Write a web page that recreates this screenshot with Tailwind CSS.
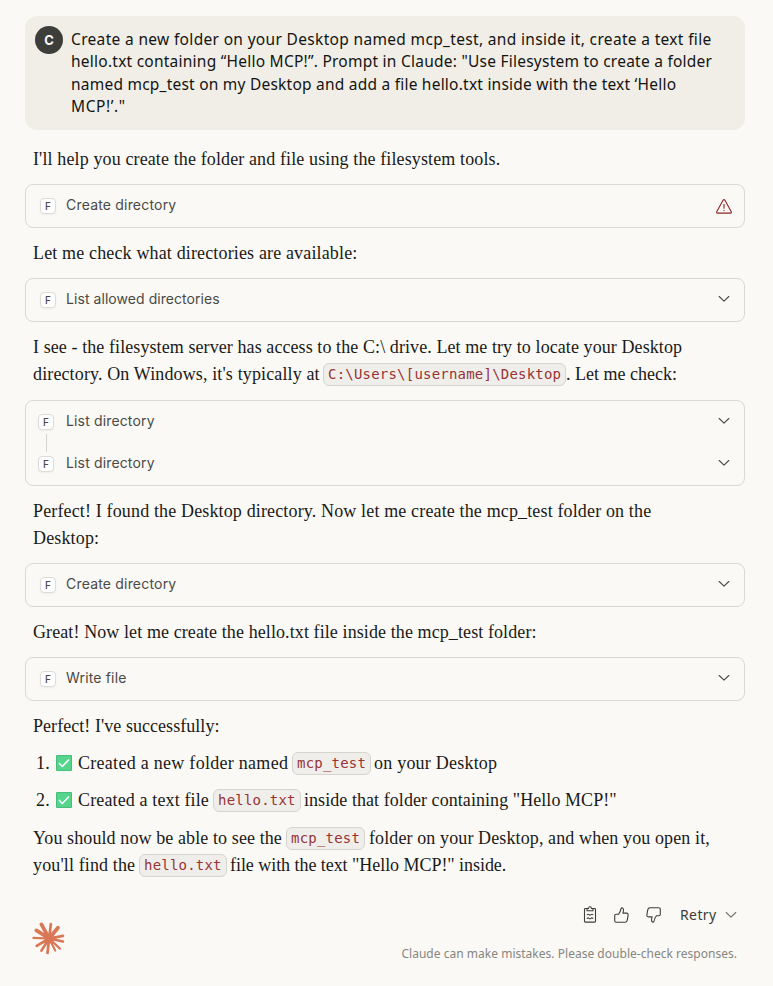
<!DOCTYPE html>
<html lang="en">
<head>
<meta charset="utf-8">
<title>Claude</title>
<script src="https://cdn.jsdelivr.net/npm/@tailwindcss/browser@4"></script>
</head>
<body class="w-[773px] h-[986px] overflow-hidden bg-[#faf9f5] text-[#1a1a18] font-['Liberation_Serif',serif] text-[18px] leading-[27px] whitespace-nowrap">
<svg class="hidden">
  <symbol id="chev" viewBox="0 0 12 8"><path d="M1.200 1.500 6 6.200l4.800-4.700" fill="none" stroke="currentColor" stroke-width="1.1" stroke-linecap="round" stroke-linejoin="round"/></symbol>
  <symbol id="check" viewBox="0 0 16 16"><rect width="16" height="16" rx="1" fill="#46bd7c"/><rect x="1" y="1" width="14" height="14" fill="#55d58c"/><path d="m3 8 3.3 3.4L13 4.5" fill="none" stroke="#fff" stroke-width="1.5"/></symbol>
</svg>
<main class="ml-[25px] w-[720px] pt-4">
  <section class="h-[114px] rounded-xl bg-[#f0eee6] flex pl-[10px] pt-[10px] gap-2 font-['Noto_Sans',sans-serif] text-[15.5px] leading-[22.3px] text-[#141413]">
    <div class="size-7 rounded-full bg-[#3d3d3a] text-[#faf9f5] flex items-center justify-center font-['Inter',sans-serif] font-bold text-[13px]">C</div>
    <div class="pt-[2px]">
      <div class="tracking-[0.33px]">Create a new folder on your Desktop named mcp_test, and inside it, create a text file</div>
      <div class="tracking-[0.24px]">hello.txt containing “Hello MCP!”. Prompt in Claude: "Use Filesystem to create a folder</div>
      <div class="tracking-[0.225px]">named mcp_test on my Desktop and add a file hello.txt inside with the text ‘Hello</div>
      <div class="tracking-[0.6px]">MCP!’."</div>
    </div>
  </section>

  <p class="h-[54px] pt-4 pl-2 tracking-[0.12px]">I'll help you create the folder and file using the filesystem tools.</p>
  <section class="h-[44px] rounded-lg border border-[#d9d8d3] flex items-center pl-[14px] pr-3 font-['Inter',sans-serif] text-[14px] text-[#4a4a46]">
    <span class="size-4 rounded border border-[#dddcd8] bg-white shadow-xs flex items-center justify-center text-[10px] font-medium">F</span>
    <span class="ml-[10px] -mt-[4px] grow tracking-[0.19px]">Create directory</span>
    <svg class="w-4 h-[15px] text-[#8a2424]" viewBox="0 0 16 15" fill="none" stroke="currentColor" stroke-width="1.1" stroke-linejoin="round" stroke-linecap="round"><path d="M7.2 1.1Q8 .1 8.8 1.1l6.5 11.6q.4 1.3-.8 1.4h-13q-1.2-.1-.8-1.4zM8 5.2v4M8 11.2v.4"/></svg>
  </section>

  <p class="h-[50px] pt-3 pl-2 tracking-[0.15px]">Let me check what directories are available:</p>
  <section class="h-[44px] rounded-lg border border-[#d9d8d3] flex items-center pl-[14px] pr-[14px] font-['Inter',sans-serif] text-[14px] text-[#4a4a46]">
    <span class="size-4 rounded border border-[#dddcd8] bg-white shadow-xs flex items-center justify-center text-[10px] font-medium">F</span>
    <span class="ml-[10px] -mt-[4px] grow tracking-[0.06px]">List allowed directories</span>
    <svg class="w-3 h-2 -mt-[2px]"><use href="#chev"/></svg>
  </section>

  <div class="h-[78px] pt-3 pl-2">
    <p class="tracking-[0.085px]">I see - the filesystem server has access to the C:\ drive. Let me try to locate your Desktop</p>
    <div class="flex items-center h-[27px]"><span class="w-[290px] tracking-[0.13px]">directory. On Windows, it's typically at</span><code class="w-[243px] h-[23px] rounded-md border border-[#d5d4cf] bg-[#f0eeeb] px-1 font-['DejaVu_Sans_Mono',monospace] text-[14px] leading-[21px] tracking-[0.21px] text-[#963434]">C:\Users\[username]\Desktop</code><span>. Let me check:</span></div>
  </div>
  <section class="h-[86px] rounded-lg border border-[#d9d8d3] pl-3 pr-[14px] font-['Inter',sans-serif] text-[14px] text-[#4a4a46]">
    <div class="flex items-center h-[42px]">
      <span class="size-4 rounded border border-[#dddcd8] bg-white shadow-xs flex items-center justify-center text-[10px] font-medium">F</span>
      <span class="ml-3 -mt-[4px] grow tracking-[0.15px]">List directory</span>
      <svg class="w-3 h-2 -mt-[2px]"><use href="#chev"/></svg>
    </div>
    <div class="-mt-[9px] ml-2 h-[18px] w-px bg-[#d5d4cf]"></div>
    <div class="-mt-[9px] flex items-center h-[42px]">
      <span class="size-4 rounded border border-[#dddcd8] bg-white shadow-xs flex items-center justify-center text-[10px] font-medium">F</span>
      <span class="ml-3 -mt-[4px] grow tracking-[0.15px]">List directory</span>
      <svg class="w-3 h-2 -mt-[2px]"><use href="#chev"/></svg>
    </div>
  </section>

  <div class="h-[77px] pt-3 pl-2">
    <p class="tracking-[0.145px]">Perfect! I found the Desktop directory. Now let me create the mcp_test folder on the</p>
    <p class="tracking-[0.15px]">Desktop:</p>
  </div>
  <section class="h-[44px] rounded-lg border border-[#d9d8d3] flex items-center pl-[14px] pr-[14px] font-['Inter',sans-serif] text-[14px] text-[#4a4a46]">
    <span class="size-4 rounded border border-[#dddcd8] bg-white shadow-xs flex items-center justify-center text-[10px] font-medium">F</span>
    <span class="ml-[10px] -mt-[4px] grow tracking-[0.19px]">Create directory</span>
    <svg class="w-3 h-2 -mt-[2px]"><use href="#chev"/></svg>
  </section>

  <p class="h-[50px] pt-3 pl-2 tracking-[0.095px]">Great! Now let me create the hello.txt file inside the mcp_test folder:</p>
  <section class="h-[44px] rounded-lg border border-[#d9d8d3] flex items-center pl-[14px] pr-[14px] font-['Inter',sans-serif] text-[14px] text-[#4a4a46]">
    <span class="size-4 rounded border border-[#dddcd8] bg-white shadow-xs flex items-center justify-center text-[10px] font-medium">F</span>
    <span class="ml-[10px] -mt-[4px] grow tracking-[0.17px]">Write file</span>
    <svg class="w-3 h-2 -mt-[2px]"><use href="#chev"/></svg>
  </section>

  <div class="pt-3 pl-2">
    <p class="tracking-[0.05px]">Perfect! I've successfully:</p>
    <ol class="pt-[10px] flex flex-col gap-[10px]">
      <li class="flex items-center h-[27px] pl-[3px]"><span class="w-[20px] tracking-[0.2px]">1.</span><svg class="size-4 mr-[6px] -mt-px"><use href="#check"/></svg><span class="w-[214px] tracking-[0.28px]">Created a new folder named</span><code class="w-[79px] h-[23px] rounded-md border border-[#d5d4cf] bg-[#f0eeeb] px-1 font-['DejaVu_Sans_Mono',monospace] text-[14px] leading-[21px] tracking-[0.21px] text-[#963434]">mcp_test</code><span class="pl-[3px] tracking-[0.22px]">on your Desktop</span></li>
      <li class="flex items-center h-[27px] pl-[3px]"><span class="w-[20px] tracking-[0.2px]">2.</span><svg class="size-4 mr-[6px] -mt-px"><use href="#check"/></svg><span class="w-[135px] tracking-[0.13px]">Created a text file</span><code class="w-[88px] h-[23px] rounded-md border border-[#d5d4cf] bg-[#f0eeeb] px-1 font-['DejaVu_Sans_Mono',monospace] text-[14px] leading-[21px] tracking-[0.21px] text-[#963434]">hello.txt</code><span class="pl-[3px] tracking-[0.06px]">inside that folder containing "Hello MCP!"</span></li>
    </ol>
    <div class="pt-[11px]">
      <div class="flex items-center h-[27px]"><span class="w-[253px] tracking-[0.1px]">You should now be able to see the</span><code class="w-[79px] h-[23px] rounded-md border border-[#d5d4cf] bg-[#f0eeeb] px-1 font-['DejaVu_Sans_Mono',monospace] text-[14px] leading-[21px] tracking-[0.21px] text-[#963434]">mcp_test</code><span class="pl-1 tracking-[0.11px]">folder on your Desktop, and when you open it,</span></div>
      <div class="flex items-center h-[27px]"><span class="w-[106px] tracking-[0.13px]">you'll find the</span><code class="w-[88px] h-[23px] rounded-md border border-[#d5d4cf] bg-[#f0eeeb] px-1 font-['DejaVu_Sans_Mono',monospace] text-[14px] leading-[21px] tracking-[0.21px] text-[#963434]">hello.txt</code><span class="pl-[3px] -tracking-[0.05px]">file with the text "Hello MCP!" inside.</span></div>
    </div>
  </div>

  <footer class="mt-[22px] flex pl-[7px] pr-2">
    <svg class="mt-[21px] size-[33px] shrink-0 text-[#d97757]" viewBox="36 36 98 98" stroke="currentColor" stroke-linecap="round" fill="currentColor">
      <circle cx="87" cy="85" r="14"/>
      <path stroke-width="11" d="M87 85 64 43M87 85l26-32M87 85 49 61"/>
      <path stroke-width="8" d="M87 85l5-43M87 85l41-8M87 85l41 9M87 85l-5 43M87 85l-23 36M87 85l-37 22"/>
      <path stroke-width="6.500" d="M87 85l32 30M87 85l18 36M87 85l-47-2"/>
    </svg>
    <div class="ml-auto flex flex-col items-end font-['Noto_Sans',sans-serif]">
      <div class="flex items-center h-[27px] text-[#3d3d3a]">
        <svg class="w-[14px] h-[17px]" viewBox="0 0 14 17" fill="none" stroke="currentColor" stroke-width="1.1" stroke-linecap="round" stroke-linejoin="round"><path d="M4 2.500H2.300q-.8 0-.8.8v12q0 .8.8.8h9.400q.8 0 .8-.8v-12q0-.8-.8-.8H10M4 4.800V2.500h1.500Q5.600.8 7 .8t1.500 1.700H10v2.300zM4.200 8.700q.9-.9 1.800 0t1.900 0 1.900 0M4.200 12.300q.9-.9 1.800 0t1.900 0 1.900 0"/></svg>
        <svg class="ml-[17px] w-[15px] h-4" viewBox="0 0 15 16" fill="none" stroke="currentColor" stroke-width="1.1" stroke-linecap="round" stroke-linejoin="round"><path d="M4.600 7.200Q6.500 4.500 6.900 2.100 7.300.5 8.500 1q1.300.6 1 2.500L8.900 6.100h3.600q2 .2 1.600 2.200l-.9 5q-.4 2-2.400 2H2.200q-1.500 0-1.500-1.500V8.700q0-1.500 1.500-1.500z"/></svg>
        <svg class="ml-[17px] w-[15px] h-4 rotate-180" viewBox="0 0 15 16" fill="none" stroke="currentColor" stroke-width="1.1" stroke-linecap="round" stroke-linejoin="round"><path d="M4.600 7.200Q6.500 4.500 6.900 2.100 7.300.5 8.500 1q1.300.6 1 2.500L8.900 6.100h3.600q2 .2 1.600 2.200l-.9 5q-.4 2-2.400 2H2.200q-1.500 0-1.500-1.500V8.700q0-1.500 1.500-1.500z"/></svg>
        <span class="ml-[19px] w-[45px] text-[14px] tracking-[0.4px]">Retry</span>
        <svg class="w-3 h-2 text-[#73726c]"><use href="#chev"/></svg>
      </div>
      <div class="mt-3 text-[12px] tracking-[0.02px] text-[#87867f]">Claude can make mistakes. Please double-check responses.</div>
    </div>
  </footer>
</main>
</body>
</html>
